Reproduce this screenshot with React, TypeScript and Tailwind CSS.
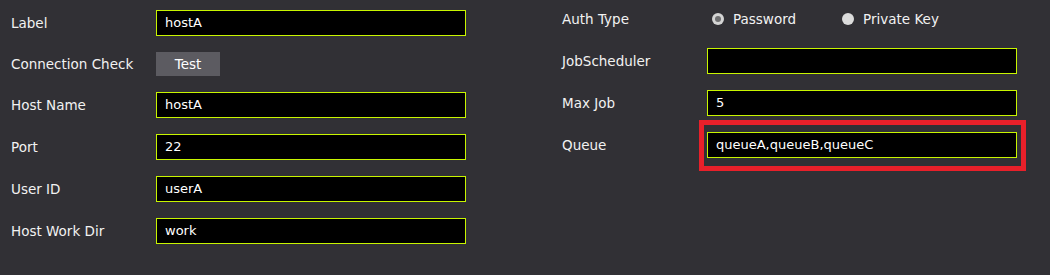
import React from "react";

const font = { fontFamily: '"DejaVu Sans", Verdana, sans-serif' };

function Field({ value }: { value: string }) {
  return (
    <div className="h-[26px] w-[310px] border border-[#c8f500] bg-black pl-[8px] flex items-center text-[13px] text-white">
      {value}
    </div>
  );
}

function Row({ label, children }: { label: string; children: React.ReactNode }) {
  return (
    <div className="flex items-center">
      <div className="w-[145px] text-[13.5px] text-[#f2f2f2]">{label}</div>
      {children}
    </div>
  );
}

export default function App() {
  return (
    <div className="w-[1050px] h-[275px] bg-[#313035] flex" style={font}>
      <div className="pl-[11px] pt-[10px] flex flex-col gap-4">
        <Row label="Label"><Field value="hostA" /></Row>
        <Row label="Connection Check">
          <div className="h-[24px] w-[64px] bg-[#5c5b61] flex items-center justify-center text-[13.5px] text-white">Test</div>
        </Row>
        <Row label="Host Name"><Field value="hostA" /></Row>
        <Row label="Port"><Field value="22" /></Row>
        <Row label="User ID"><Field value="userA" /></Row>
        <Row label="Host Work Dir"><Field value="work" /></Row>
      </div>
      <div className="pl-[96px] pt-[6px] flex flex-col gap-4">
        <Row label="Auth Type">
          <div className="h-[26px] flex items-center text-[13.5px] text-[#f2f2f2]">
            <div className="ml-[5px] w-[12px] h-[12px] rounded-full bg-[#d4d4d4] flex items-center justify-center">
              <div className="w-[6px] h-[6px] rounded-full bg-[#6e6e70]" />
            </div>
            <span className="ml-[9px]">Password</span>
            <div className="ml-[46px] w-[12px] h-[12px] rounded-full bg-[#dcdcdc]" />
            <span className="ml-[9px]">Private Key</span>
          </div>
        </Row>
        <Row label="JobScheduler"><Field value="" /></Row>
        <Row label="Max Job"><Field value="5" /></Row>
        <Row label="Queue">
          <div className="relative">
            <Field value="queueA,queueB,queueC" />
            <div className="absolute left-[-8px] right-[-9px] top-[-12px] bottom-[-13px] border-[5px] border-[#e8202a] pointer-events-none" />
          </div>
        </Row>
      </div>
    </div>
  );
}
